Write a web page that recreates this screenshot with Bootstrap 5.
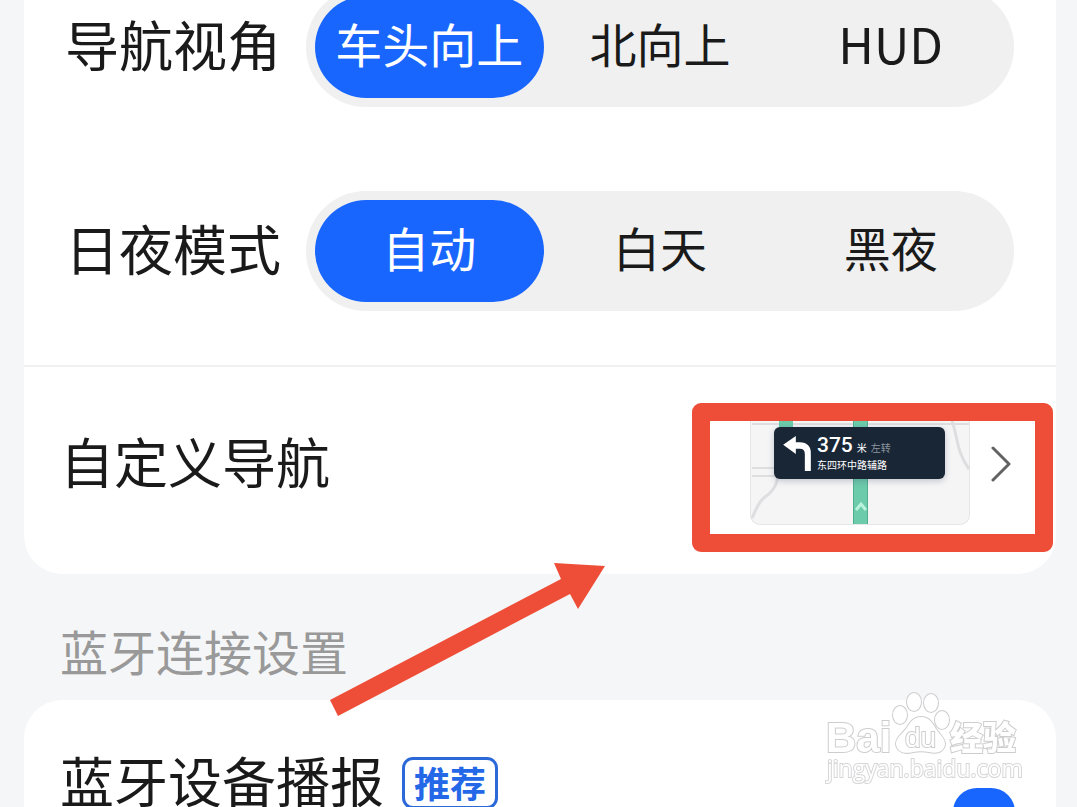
<!DOCTYPE html>
<html lang="zh-CN">
<head>
<meta charset="utf-8">
<meta name="viewport" content="width=device-width, initial-scale=1">
<title>导航设置</title>
<link href="https://cdn.jsdelivr.net/npm/bootstrap@5.3.0/dist/css/bootstrap.min.css" rel="stylesheet">
<style>
  body { height: 100vh; overflow: hidden; background: #f5f6f8; color: #1a1a1a; font-family: "Noto Sans CJK SC", sans-serif; }
  .settings { height: 100vh; overflow: hidden; padding: 0 21px 0 24px; }
  .panel { background: #fff; border-radius: 38px; }
  .panel-first { margin-top: -67px; }
  .choices { padding: 54px 42px 54px 41px; gap: 84px; }
  .choice-row { gap: 25px; }
  .row-title { padding-bottom: 6px; font-size: 54px; line-height: 72px; white-space: nowrap; }
  .segments { padding: 9px; gap: 2px; border-radius: 60px; background: #f0f0f0; }
  .segments .segment { flex: 1 1 0; height: 102px; padding: 0; border: 0; border-radius: 51px; font-size: 47px; line-height: 94px; color: #1a1a1a; }
  .segments .latin { font-size: 49px; }
  .segments .btn-check:checked + .segment { background: #1966ff; color: #fff; }
  .custom-row { padding: 36px 44px 49px 36px; border-top: 2px solid #f0f0f2; }
  .preview { width: 220px; height: 122px; border-radius: 10px; overflow: hidden; box-shadow: inset 0 0 0 1px #e6e6e8; background: #f5f5f6; }
  .preview-map { display: block; }
  .hint { top: 24px; left: 24px; width: 171px; height: 52px; padding: 4px 9px; gap: 6px; border-radius: 6px; background: #192636; color: #fff; box-shadow: 0 2px 6px rgba(40, 50, 90, .25); }
  .hint-distance { font-family: Roboto, sans-serif; font-size: 21px; font-weight: 500; line-height: 24px; }
  .hint-text { font-size: 10px; line-height: 16px; white-space: nowrap; }
  .hint-dim { color: #8d959f; }
  .open-link { gap: 21px; }
  .callout-frame { top: 36px; right: 3px; width: 361px; height: 149px; border: 18px solid #ee4e37; border-radius: 9px; pointer-events: none; }
  .callout-arrow { top: 195px; right: 450px; pointer-events: none; z-index: 2; }
  .group-title { margin: 0; padding: 40px 36px 14px; font-size: 48px; font-weight: 400; line-height: 72px; color: #999; }
  .device-row { min-height: 236px; padding: 44px 41px 44px 36px; }
  .recommend { margin-left: 18px; height: 52px; padding: 0 9px; border: 3px solid #2b68d8; border-radius: 11px; color: #2468e8; font-size: 36px; font-weight: 700; line-height: 44px; }
  .toggle { appearance: none; width: 62px; height: 60px; margin: 0; border-radius: 24px; background: #aaa; }
  .toggle:checked { background: #1966ff; }
  .watermark { right: 52px; bottom: 20px; pointer-events: none; }
</style>
</head>
<body>
<main class="settings">
  <section class="panel panel-first">
    <div class="choices d-flex flex-column">
      <div class="choice-row d-flex align-items-center" role="radiogroup" aria-labelledby="view-title">
        <span class="row-title" id="view-title">导航视角</span>
        <div class="segments d-flex flex-fill">
          <input class="btn-check" type="radio" name="view" id="view-head" checked>
          <label class="btn segment" for="view-head">车头向上</label>
          <input class="btn-check" type="radio" name="view" id="view-north">
          <label class="btn segment" for="view-north">北向上</label>
          <input class="btn-check" type="radio" name="view" id="view-hud">
          <label class="btn segment latin" for="view-hud">HUD</label>
        </div>
      </div>
      <div class="choice-row d-flex align-items-center" role="radiogroup" aria-labelledby="mode-title">
        <span class="row-title" id="mode-title">日夜模式</span>
        <div class="segments d-flex flex-fill">
          <input class="btn-check" type="radio" name="mode" id="mode-auto" checked>
          <label class="btn segment" for="mode-auto">自动</label>
          <input class="btn-check" type="radio" name="mode" id="mode-day">
          <label class="btn segment" for="mode-day">白天</label>
          <input class="btn-check" type="radio" name="mode" id="mode-night">
          <label class="btn segment" for="mode-night">黑夜</label>
        </div>
      </div>
    </div>

    <div class="custom-row d-flex align-items-center justify-content-between position-relative">
      <span class="row-title">自定义导航</span>
      <a class="open-link d-flex align-items-center text-decoration-none" href="#custom" aria-label="自定义导航">
        <div class="preview position-relative">
          <svg class="preview-map" width="220" height="122" viewBox="0 0 220 122" fill="none" aria-hidden="true">
            <path d="M2 21H219M2 65H30M2 73H29" stroke="#dedee1" stroke-width="2"/>
            <path d="M28 66C29 80 24 88 15 94C8 99 6 107 2 115M202 18C208 34 206 48 219 66" stroke="#dedee1" stroke-width="3"/>
            <path d="M29 10H43V40H29ZM103 10H118V121H103Z" fill="#6ccbab"/>
            <path d="M103.500 10V121M117.500 10V121" stroke="#4fae90"/>
            <path d="M106 107L111 101L116 107" stroke="#b9f2dd" stroke-width="3"/>
          </svg>
          <div class="hint d-flex align-items-center position-absolute">
            <svg width="28" height="35" viewBox="130 78 83 105" aria-hidden="true"><path d="M130 104L168 78V97H180Q213 98 213 130V183H195V132Q195 116 180 116H168V132Z" fill="#fff"/></svg>
            <div>
              <div class="d-flex align-items-baseline gap-1"><span class="hint-distance">375</span><span class="hint-text">米</span><span class="hint-text hint-dim">左转</span></div>
              <div class="hint-text">东四环中路辅路</div>
            </div>
          </div>
        </div>
        <svg width="21" height="36" viewBox="0 0 21 36" fill="none" aria-hidden="true"><path d="M2 2L18 18L2 34" stroke="#626262" stroke-width="3" stroke-linecap="round" stroke-linejoin="round"/></svg>
      </a>
      <div class="callout-frame position-absolute"></div>
      <svg class="callout-arrow position-absolute" width="276" height="155" viewBox="0 0 276 155" aria-hidden="true"><path d="M0 138L231 17L224 1L275 4L248 47L240 32L8 154Z" fill="#ee4e37"/></svg>
    </div>
  </section>

  <h2 class="group-title">蓝牙连接设置</h2>

  <section class="panel">
    <div class="device-row d-flex align-items-center justify-content-between">
      <div class="d-flex align-items-center align-self-start">
        <label class="row-title" for="device-voice">蓝牙设备播报</label>
        <span class="recommend">推荐</span>
      </div>
      <input class="toggle" type="checkbox" role="switch" id="device-voice" checked>
    </div>
  </section>
</main>

<svg class="watermark position-fixed" width="200" height="100" viewBox="0 0 200 100" fill="#fff" stroke="#cdcdcf" stroke-width="2" paint-order="stroke" aria-hidden="true">
  <ellipse cx="75" cy="28" rx="7" ry="9"/><ellipse cx="89" cy="15" rx="7" ry="9"/><ellipse cx="106" cy="16" rx="7" ry="9"/><ellipse cx="117" cy="33" rx="7" ry="9"/>
  <path d="M96 30C88 30 85 36 81 42C76 48 71 51 71 57C72 66 81 67 88 65C93 64 99 64 104 65C112 67 119 65 120 57C120 51 115 48 111 42C107 35 104 30 96 30Z"/>
  <text x="1" y="65" font-family="Liberation Sans, sans-serif" font-size="42" font-weight="700">Bai</text>
  <text x="80" y="60" font-family="Liberation Sans, sans-serif" font-size="28">du</text>
  <text x="125" y="63" font-family="Noto Sans CJK SC, sans-serif" font-size="33" font-weight="900">经验</text>
  <text x="2" y="90" font-family="Open Sans, sans-serif" font-size="23" stroke="#d6d6d8">jingyan.baidu.com</text>
</svg>
<script src="https://cdn.jsdelivr.net/npm/bootstrap@5.3.0/dist/js/bootstrap.bundle.min.js"></script>
</body>
</html>
